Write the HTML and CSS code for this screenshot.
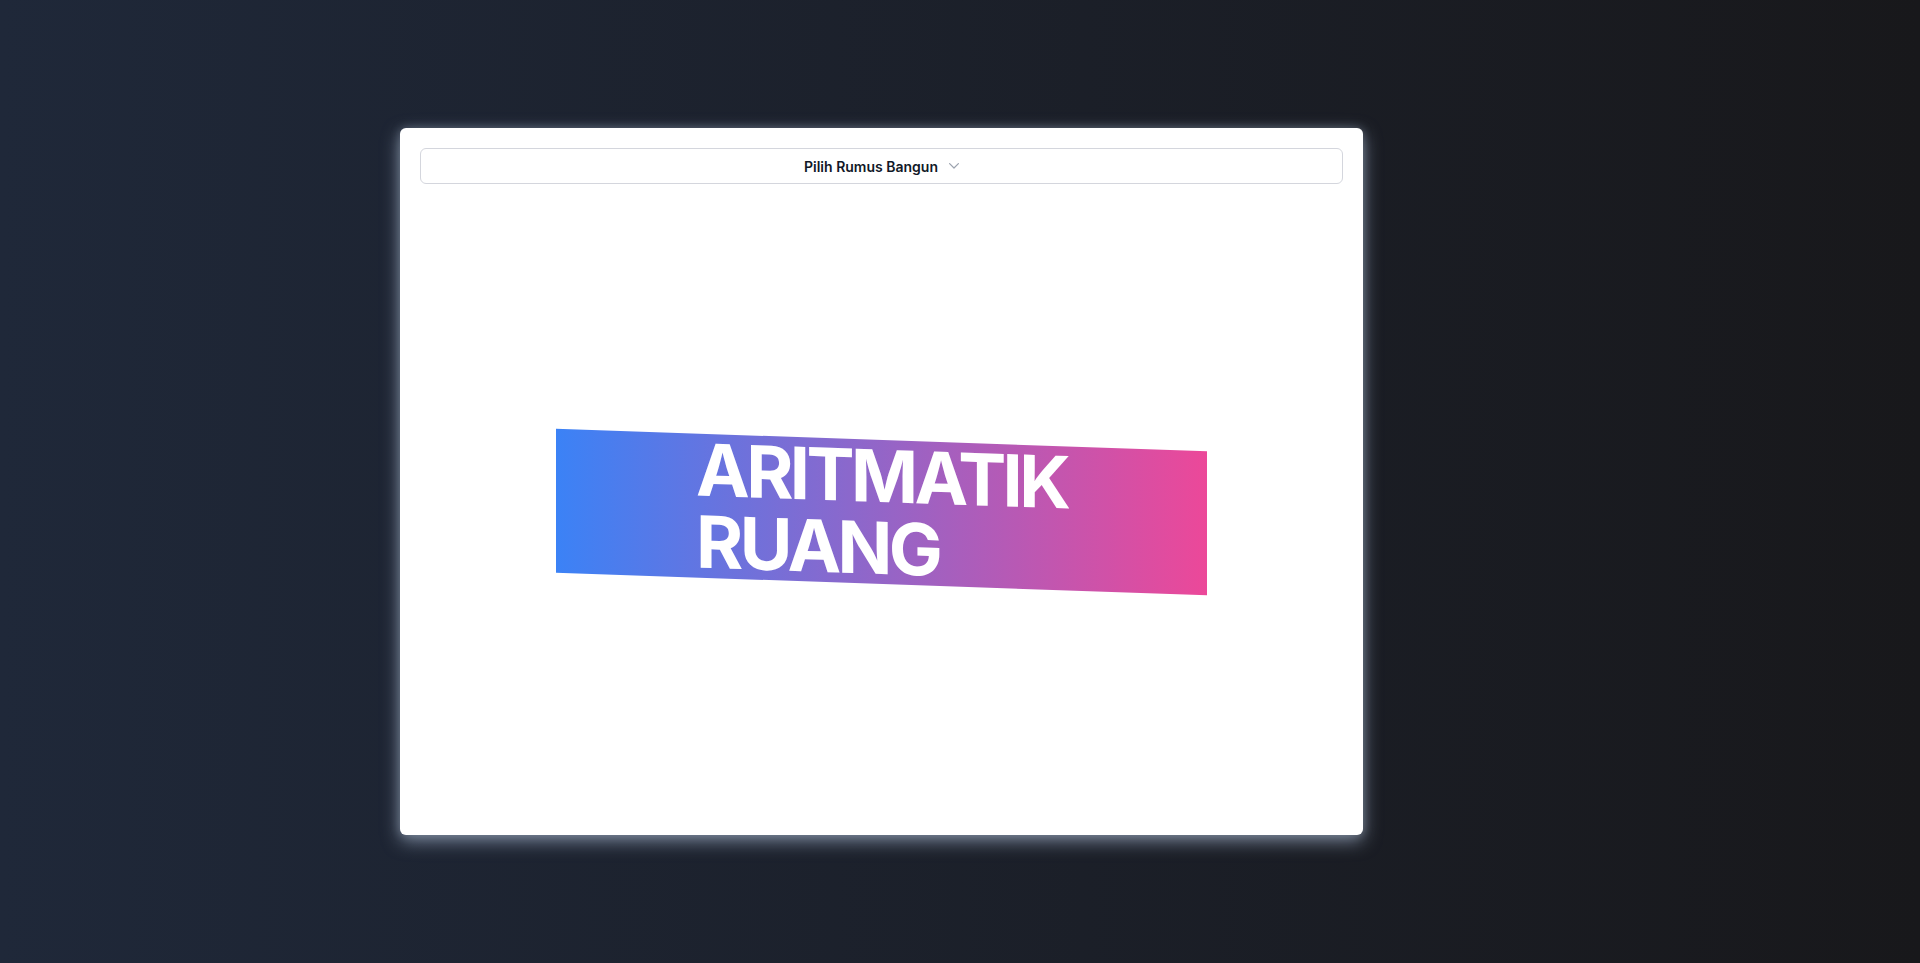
FILE: index.html
```html
<!DOCTYPE html>
<html lang="id">
<head>
<meta charset="utf-8">
<title>Aritmatik Ruang</title>
<link rel="stylesheet" href="styles.css">
</head>
<body>
<main class="stage">
  <section class="card">
    <button class="select" type="button">
      <span class="select-label">Pilih Rumus Bangun</span>
      <svg class="chevron" width="10" height="6" viewBox="0 0 10 6" aria-hidden="true"><path d="M0.6 0.6 L5 5 L9.4 0.6" fill="none" stroke="currentColor" stroke-width="1.2" stroke-linecap="round" stroke-linejoin="round"/></svg>
    </button>
    <div class="hero">
      <h1 class="banner">ARITMATIK<br>RUANG</h1>
    </div>
  </section>
</main>
</body>
</html>
```
FILE: styles.css
```css
* { box-sizing: border-box; }
html, body { margin: 0; height: 100%; }
body {
  font-family: Inter, "Noto Sans", sans-serif;
  background: linear-gradient(to right, #1f2839, #18181b);
}
.stage {
  height: 100vh;
  display: flex;
  align-items: center;
  padding-left: 400px;
}
.card {
  width: 963px;
  height: 707px;
  background: #fff;
  border-radius: 6px;
  padding: 20px;
  display: flex;
  flex-direction: column;
  gap: 24px;
  box-shadow: 0 6px 18px rgba(148, 163, 184, 0.75), 0 0 10px rgba(148, 163, 184, 0.35);
}
.select {
  height: 36px;
  width: 100%;
  background: #fff;
  border: 1px solid #d4d6dd;
  border-radius: 6px;
  display: flex;
  align-items: center;
  justify-content: center;
  font-family: inherit;
  font-size: 14px;
  font-weight: 600;
  color: #111827;
  padding: 0;
}
.chevron { margin-left: 11px; color: #9ca3af; }
.hero {
  flex: 1;
  display: flex;
  align-items: center;
  justify-content: center;
}
.banner {
  margin: 0;
  padding: 0 140px;
  font-size: 72px;
  line-height: 72px;
  font-weight: 700;
  letter-spacing: -0.05em;
  color: #fff;
  background: linear-gradient(to right, #3b82f6, #ec4899);
  transform: skewY(2deg);
}
```
